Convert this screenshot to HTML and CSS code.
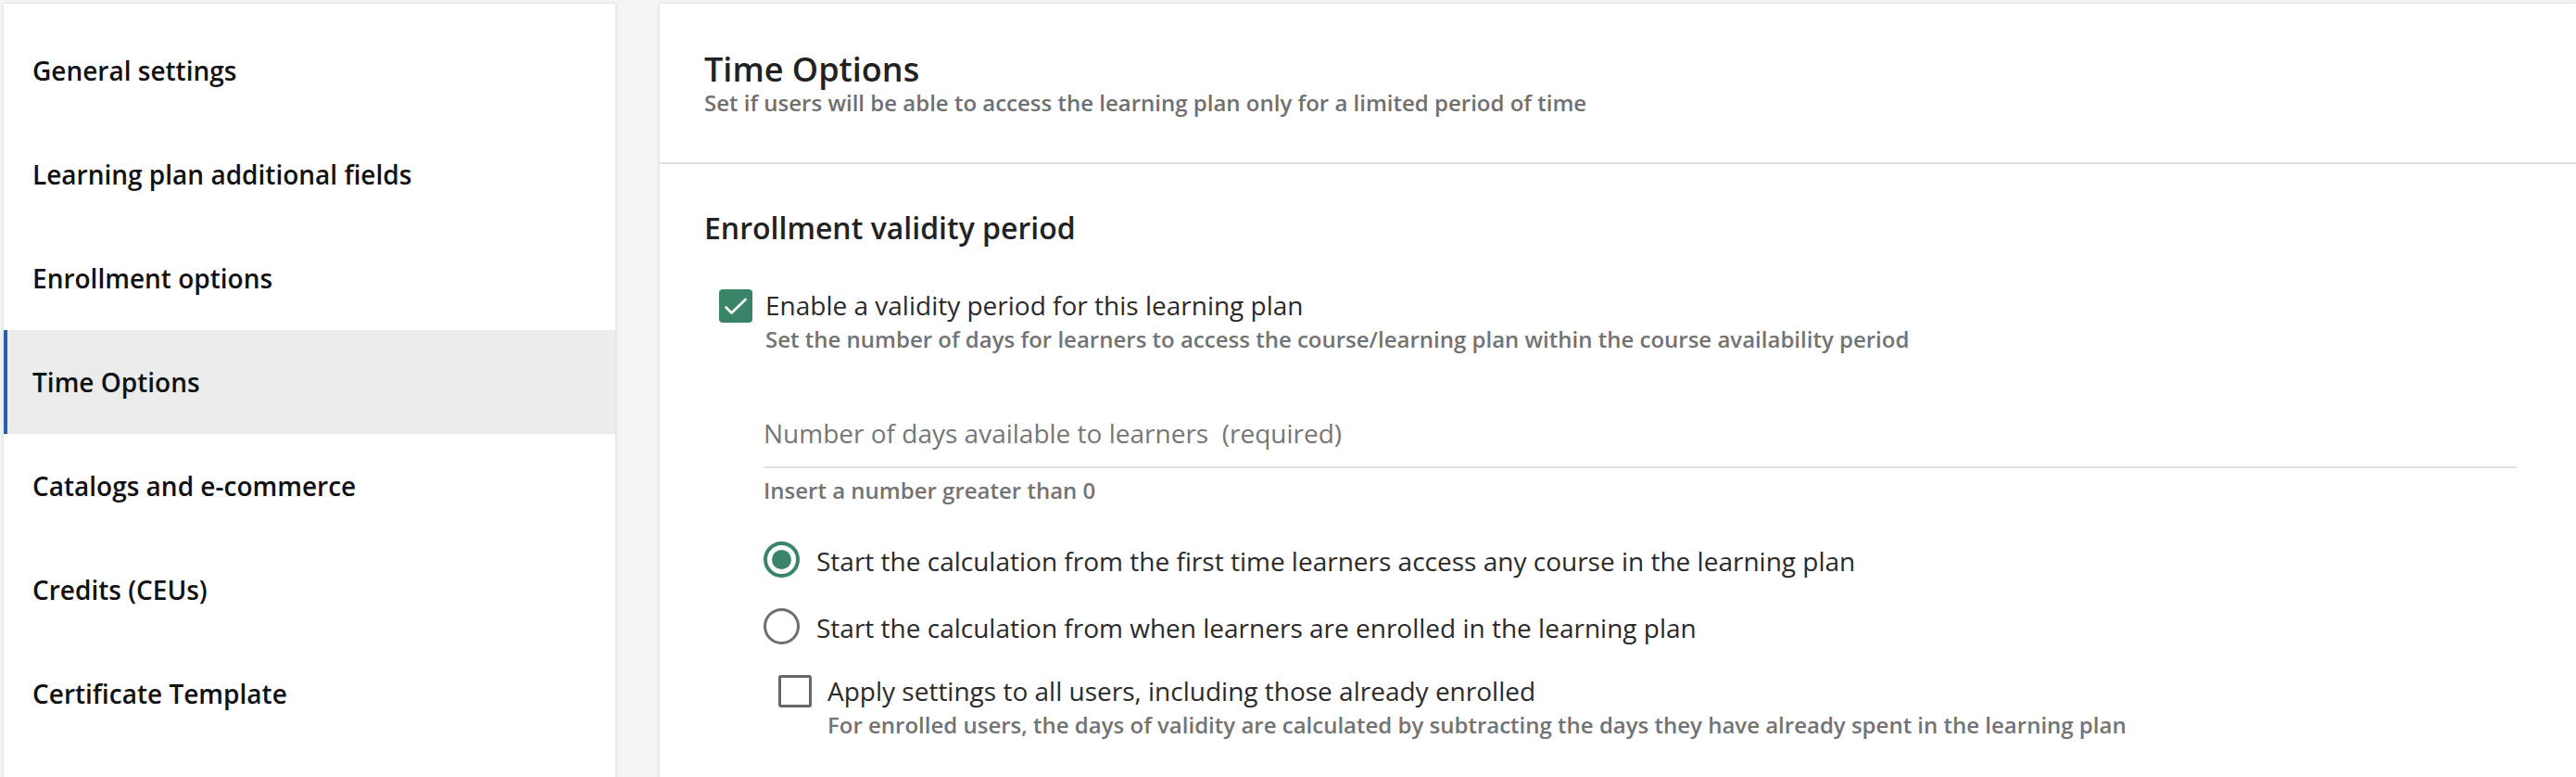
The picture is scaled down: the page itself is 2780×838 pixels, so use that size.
FILE: index.html
```html
<!DOCTYPE html>
<html lang="en">
<head>
<meta charset="utf-8">
<title>Time Options</title>
<link rel="stylesheet" href="styles.css">
</head>
<body>
<div class="layout">
  <nav class="sidebar">
    <a class="nav-item">General settings</a>
    <a class="nav-item">Learning plan additional fields</a>
    <a class="nav-item">Enrollment options</a>
    <a class="nav-item active">Time Options</a>
    <a class="nav-item">Catalogs and e-commerce</a>
    <a class="nav-item">Credits (CEUs)</a>
    <a class="nav-item">Certificate Template</a>
  </nav>
  <main class="panel">
    <header class="panel-header">
      <h1 class="title">Time Options</h1>
      <p class="subtitle">Set if users will be able to access the learning plan only for a limited period of time</p>
    </header>
    <section class="section">
      <h2 class="section-title">Enrollment validity period</h2>
      <div class="check-row">
        <span class="checkbox checked">
          <svg viewBox="0 0 36 36" width="36" height="36"><path d="M7.5 19.5 L13.5 25.5 L28.5 11" fill="none" stroke="#fff" stroke-width="2.6" stroke-linecap="round" stroke-linejoin="round"/></svg>
        </span>
        <div class="check-text">
          <div class="label">Enable a validity period for this learning plan</div>
          <div class="helper">Set the number of days for learners to access the course/learning plan within the course availability period</div>
        </div>
      </div>
      <div class="options">
        <div class="field">
          <div class="placeholder">Number of days available to learners&nbsp; (required)</div>
        </div>
        <div class="helper field-helper">Insert a number greater than 0</div>
        <div class="radio-row first">
          <span class="radio selected"><span class="dot"></span></span>
          <span class="label">Start the calculation from the first time learners access any course in the learning plan</span>
        </div>
        <div class="radio-row second">
          <span class="radio"></span>
          <span class="label">Start the calculation from when learners are enrolled in the learning plan</span>
        </div>
        <div class="apply-row">
          <span class="checkbox empty"></span>
          <div class="check-text">
            <div class="label">Apply settings to all users, including those already enrolled</div>
            <div class="helper">For enrolled users, the days of validity are calculated by subtracting the days they have already spent in the learning plan</div>
          </div>
        </div>
      </div>
    </section>
  </main>
</div>
</body>
</html>
```
FILE: styles.css
```css
html, body {
  margin: 0;
  padding: 0;
  height: 100%;
  overflow: hidden;
}
body {
  background: #f4f4f4;
  font-family: "Open Sans", "Noto Sans", sans-serif;
  color: #222;
}
.layout {
  display: flex;
  align-items: flex-start;
  gap: 48px;
  padding: 4px 0 0 4px;
}
.sidebar {
  width: 660px;
  flex: 0 0 660px;
  background: #fff;
  padding-top: 16px;
  box-shadow: 0 0 4px rgba(0,0,0,0.14);
  display: flex;
  flex-direction: column;
  min-height: 1000px;
}
.nav-item {
  display: flex;
  align-items: center;
  height: 112px;
  padding-left: 27px;
  border-left: 4px solid transparent;
  font-size: 28px;
  font-weight: 600;
  color: #111;
  line-height: 38px;
}
.nav-item.active {
  background: #ebebeb;
  border-left-color: #2961a8;
}
.panel {
  flex: 1;
  background: #fff;
  box-shadow: 0 0 4px rgba(0,0,0,0.14);
  min-height: 1000px;
}
.panel-header {
  padding: 49px 64px 50px 48px;
  border-bottom: 2px solid #e2e2e2;
}
.title {
  margin: 0;
  font-size: 36px;
  line-height: 44px;
  font-weight: 600;
  color: #222;
}
.subtitle {
  margin: 0;
  font-size: 24px;
  line-height: 28px;
  font-weight: 600;
  color: #707070;
}
.section {
  padding: 49px 64px 0 48px;
}
.section-title {
  margin: 0;
  font-size: 32px;
  line-height: 40px;
  font-weight: 600;
  color: #222;
}
.check-row {
  display: flex;
  align-items: flex-start;
  gap: 14px;
  margin-top: 45px;
  padding-left: 16px;
}
.check-row .helper {
  margin-top: 4px;
}
.checkbox {
  flex: 0 0 auto;
  box-sizing: border-box;
  width: 36px;
  height: 36px;
  border-radius: 4px;
  display: block;
}
.checkbox.checked {
  background: #3a8467;
  margin-top: 1px;
}
.checkbox.checked svg { display: block; }
.checkbox.empty {
  border: 3px solid #666;
  border-radius: 3px;
  width: 36px;
  height: 35px;
  margin-top: 3px;
}
.label {
  font-size: 28px;
  line-height: 36px;
  color: #2a2a2a;
}
.helper {
  font-size: 24px;
  line-height: 30px;
  font-weight: 600;
  color: #737373;
}
.options {
  margin-left: 64px;
}
.field {
  margin-top: 67px;
  padding-bottom: 17px;
  border-bottom: 2px solid #e2e2e2;
}
.placeholder {
  font-size: 28px;
  line-height: 38px;
  color: #767676;
}
.field-helper {
  margin-top: 9px;
}
.radio-row {
  display: flex;
  align-items: flex-start;
  gap: 18px;
}
.radio-row .label {
  line-height: 40px;
}
.radio-row.first { margin-top: 41px; }
.radio-row.second { margin-top: 32px; }
.radio {
  flex: 0 0 auto;
  box-sizing: border-box;
  width: 39px;
  height: 39px;
  border-radius: 50%;
  border: 3.5px solid #6e6e6e;
  display: flex;
  align-items: center;
  justify-content: center;
  margin-top: -1px;
}
.radio.selected {
  border: 4px solid #3a8467;
}
.radio .dot {
  width: 21px;
  height: 21px;
  border-radius: 50%;
  background: #3a8467;
}
.apply-row {
  display: flex;
  align-items: flex-start;
  gap: 17px;
  margin-top: 28px;
  padding-left: 16px;
}
.apply-row .label {
  line-height: 40px;
}
.apply-row .helper {
  margin-top: 2px;
}
```
